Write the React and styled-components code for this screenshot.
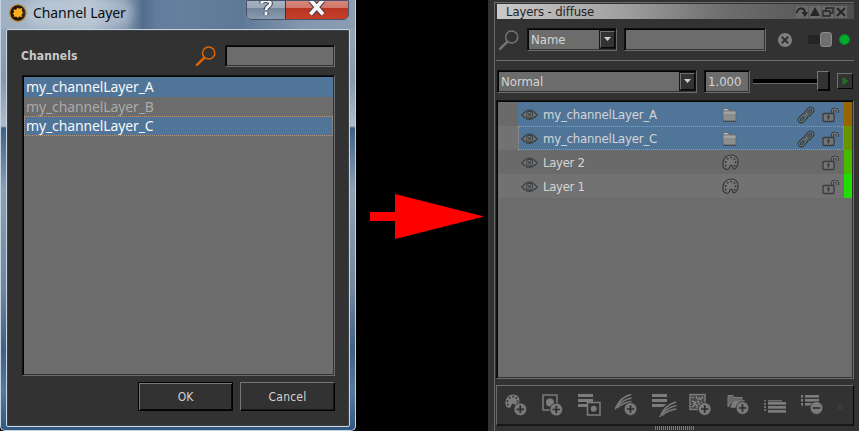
import React from 'react';
import styled, { createGlobalStyle, css } from 'styled-components';

const Global = createGlobalStyle`
  * { box-sizing: border-box; }
  body { margin: 0; background: #000; overflow: hidden; }
  svg { display: block; flex: none; }
`;

const ui = '"Noto Sans", "Open Sans", sans-serif';
const tahoma = '"DejaVu Sans Condensed", "DejaVu Sans", sans-serif';

const Page = styled.main`
  display: flex;
  width: 859px;
  height: 431px;
  background: #000;
  font-family: ${tahoma};
  overflow: hidden;
`;

/* ---------- Channel dialog ---------- */
const Dialog = styled.section`
  width: 356px;
  height: 431px;
  display: flex;
  flex-direction: column;
  padding: 0 5px 3px;
  border: solid #c4d4e2;
  border-width: 0 1px 1px;
  border-radius: 0 0 5px 5px;
  background:
    linear-gradient(180deg, transparent 29px, #94a5b8 29px, #8598ae 80px, #aebdcb 126px, #3f6185 128px, #8aa1b6 190px, #6f879f 290px, #405f83 350px, #56799e 390px, #315780 431px) 0 0 / 100% 100% no-repeat,
    linear-gradient(90deg, #9fb0c2 0, #aebccb 90px, #7d92aa 126px, #536d8c 142px, #617c9c 155px, #65809f 180px, #5e7997 240px, #8396ad 300px, #8c9db2 356px);
`;
const DialogTitle = styled.header`
  height: 29px;
  flex: none;
  display: flex;
  align-items: flex-start;
  padding: 0 0 0 2px;
`;
const AppIcon = styled.svg`margin: 4px 0 0 1px;`;
const TitleText = styled.h1`
  margin: 3px 0 0 3px;
  padding: 0 3px;
  font: 400 14px/20px ${ui};
  letter-spacing: -0.08px;
  color: #0b0e12;
  white-space: nowrap;
  border-radius: 10px;
  background: rgba(205, 216, 228, 0.4);
  box-shadow: 0 0 8px 5px rgba(205, 216, 228, 0.4);
`;
const CaptionButtons = styled.div`
  display: flex;
  margin-left: auto;
  margin-right: 1px;
  height: 20px;
  border: 1px solid #d2dae3;
  border-top: 0;
  border-radius: 0 0 5px 5px;
  overflow: hidden;
  outline: 1px solid #46536a;
  outline-offset: -1px;
`;
const CaptionButton = styled.div`
  width: ${p => (p.$close ? 63 : 38)}px;
  display: flex;
  justify-content: center;
  border-left: ${p => (p.$close ? '1px solid #651c1c' : '0')};
  background: ${p => p.$close
    ? 'linear-gradient(#da8a7f 0, #ce7569 8px, #b8331f 8px, #c94029 20px)'
    : 'linear-gradient(#a5b2c1 0, #9aa9ba 8px, #71849a 8px, #8b9caf 20px)'};
`;
const DialogBody = styled.div`
  flex: 1;
  display: flex;
  flex-direction: column;
  background: #323232;
  border: 1px solid #c9d5e0;
  box-shadow: inset 0 0 0 1px #3c4148;
  padding: 15px 14px 0 15px;
  border-radius: 2px;
`;
const SearchRow = styled.div`
  display: flex;
  height: 22px;
  align-items: center;
`;
const Heading = styled.h2`
  margin: 0 auto 0 -1px;
  font: 700 12px/20px ${tahoma};
  letter-spacing: 0.1px;
  color: #c9c9c9;
`;
const sunken = css`
  background: #6c6c6c;
  border: 1px solid #6c6c6c;
  border-top-color: #111;
  border-left-color: #111;
  box-shadow: inset 1px 1px 0 #050505, inset -1px -1px 0 #333;
`;
const Field = styled.div`
  ${sunken}
  width: ${p => p.$width}px;
  height: ${p => p.$height || 23}px;
  flex: none;
  color: #d4d4d4;
  font-size: 13px;
  line-height: 22px;
  padding-left: 3px;
`;
const SearchField = styled(Field)`
  margin-left: 8px;
`;
const ChannelList = styled.div`
  ${sunken}
  height: 301px;
  flex: none;
  margin-top: 8px;
  padding: 1px 1px 0;
`;
const ChannelRow = styled.div`
  height: ${p => (p.$focus ? 20 : 19.5)}px;
  padding-left: 2px;
  font: 400 14px/19px ${ui};
  letter-spacing: -0.12px;
  color: ${p => (p.$on ? '#f5f8fb' : '#aaa')};
  background: ${p => (p.$on ? '#507599' : 'transparent')};
  outline: ${p => (p.$focus ? '1px dotted #b59678' : '0')};
  outline-offset: -1px;
`;
const DialogActions = styled.div`
  display: flex;
  justify-content: flex-end;
  gap: 7px;
  margin-top: 6px;
`;
const PushButton = styled.button`
  width: 95px;
  height: 29px;
  padding: 1px 0 0;
  border: 1px solid ${p => (p.$primary ? '#000' : '#777')};
  border-right-color: #000;
  border-bottom-color: #000;
  box-shadow: ${p => (p.$primary ? 'inset 1px 1px 0 #777, inset -1px -1px 0 #0b0b0b' : 'inset -1px -1px 0 #151515')};
  background: #323232;
  color: #d2d2d2;
  font: 400 12px/20px ${tahoma};
  letter-spacing: ${p => (p.$primary ? 0 : 0.2)}px;
`;

/* ---------- Arrow ---------- */
const Gap = styled.div`
  width: 132px;
  flex: none;
  padding: 194px 0 0 13px;
`;

/* ---------- Layers palette ---------- */
const Palette = styled.section`
  width: 371px;
  flex: none;
  display: flex;
  flex-direction: column;
  background: #323232;
  padding: 2px 5px 0 6px;
`;
const PaletteFrame = styled.div`
  flex: 1;
  display: flex;
  flex-direction: column;
  border: solid #6b6b6b;
  border-width: 1px 0 0 1px;
  padding: 1px 0 0 1px;
`;
const PaletteTitle = styled.header`
  height: 15px;
  flex: none;
  display: flex;
  align-items: center;
  margin-left: 1px;
  padding: 0 7px 0 9px;
  font-size: 13px;
  letter-spacing: -0.12px;
  line-height: 14px;
  color: #242424;
  background: linear-gradient(90deg, #cacaca, #a0a0a0 35%, #6e6e6e 63%, #4d4d4d);
`;
const TitleIcons = styled.div`
  display: flex;
  gap: 1px;
  margin-left: auto;
`;
const TitleIcon = styled.svg`background: #696969;`;
const FilterRow = styled.div`
  display: flex;
  align-items: center;
  height: 42px;
  flex: none;
  padding-left: 2px;
  border-bottom: 1px solid #6f6f6f;
`;
const BlendRow = styled.div`
  display: flex;
  align-items: center;
  height: 39px;
  flex: none;
  padding: 1px 0 0 1px;
`;
const Combo = styled(Field)`
  display: flex;
  justify-content: space-between;
  margin-left: ${p => p.$left || 0}px;
`;
const ComboArrow = styled.span`
  width: 15px;
  height: 17px;
  margin: 2px 1px 0 0;
  border: 1px solid #707070;
  border-right-color: #080808;
  border-bottom-color: #080808;
  outline: 1px solid #151515;
  outline-offset: 0;
  background: #333;
  display: flex;
  align-items: center;
  justify-content: center;
`;
const QueryField = styled(Field)`margin-left: 7px;`;
const ValueField = styled(Field)`
  margin-left: 7px;
`;
const ClearIcon = styled.svg`margin-left: 11px;`;
const Toggle = styled.div`
  display: flex;
  align-items: center;
  margin-left: 15px;
  &::before { content: ''; width: 10px; height: 7px; background: #222629; border: 1px solid #252525; }
`;
const Knob = styled.div`
  width: 12px;
  height: 15px;
  border-radius: 3px;
  background: #6f6f6f;
  border: 1px solid #8a8a8a;
`;
const Status = styled.div`
  width: 11px;
  height: 11px;
  border-radius: 50%;
  margin-left: 7px;
  background: #00ad2b;
  border: 1px solid #0a8428;
`;
const Slider = styled.div`
  display: flex;
  align-items: center;
  margin-left: 3px;
  &::before { content: ''; width: 64px; height: 4px; background: #000; border: solid #686868; border-width: 0 0 1px; }
`;
const SliderHandle = styled.div`
  width: 13px;
  height: 20px;
  background: #333;
  border: 1px solid #777;
  border-right: 2px solid #080808;
  border-bottom: 2px solid #080808;
`;
const PlayButton = styled.div`
  width: 16px;
  height: 16px;
  margin-left: 7px;
  display: flex;
  align-items: center;
  justify-content: center;
  border: 1px solid #727272;
  border-right-color: #050505;
  border-bottom-color: #050505;
`;
const LayerList = styled.div`
  ${sunken}
  height: 279px;
  flex: none;
  padding: 1px 1px 0;
`;
const LayerRow = styled.div`
  display: flex;
  height: 24px;
  padding-left: 20px;
  background: ${p => (p.$alt ? '#727272' : '#6a6a6a')};
`;
const LayerContent = styled.div`
  flex: 1;
  display: grid;
  grid-template-columns: 25px 179px 75px 25px 1fr;
  align-items: center;
  padding-top: 1px;
  background: ${p => (p.$on ? '#507599' : 'transparent')};
  outline: ${p => (p.$focus ? '1px dotted #b59678' : '0')};
  outline-offset: -1px;
  font-size: 13px;
  letter-spacing: ${p => p.$on ? -0.18 : -0.3}px;
  line-height: 23px;
  color: #d5d5d5;
  white-space: nowrap;
`;
const EyeIcon = styled.svg`margin-left: 3px;`;
const ColorTag = styled.div`
  width: 8px;
  background: ${p => p.$color};
`;
const Toolbar = styled.div`
  height: 41px;
  flex: none;
  display: flex;
  align-items: center;
  margin-top: 6px;
  padding: 3px 0 0 7px;
  border: 1px solid #6b6b6b;
  border-right-color: #050505;
  border-bottom: 2px solid #171717;
`;
const Tool = styled.div`
  width: 37.1px;
  height: 28px;
  flex: none;
`;
const More = styled.span`
  font-size: 13px;
  line-height: 20px;
  color: #444;
  margin-left: -1px;
`;
const Grip = styled.div`
  width: 39px;
  height: 4px;
  margin-left: 159px;
  background: repeating-linear-gradient(90deg, #777 0 1px, #323232 1px 2px);
`;

/* ---------- Drawings ---------- */
const SearchIcon = ({ color }) => (
  <svg width="22" height="22" viewBox="0 0 22 22" fill="none" stroke={color}>
    <circle cx="13.7" cy="8" r="6.1" strokeWidth="1.5" />
    <path d="M9.2 12.8 2 19.8" strokeWidth="2.5" strokeLinecap="round" />
  </svg>
);
const Down = () => <svg width="9" height="5"><path d="M1 0h7L4.5 4z" fill="#d0d0d0" /></svg>;

const Eye = () => (
  <EyeIcon width="17" height="14" viewBox="0 0 18 14" fill="none" stroke="#3b4145">
    <path d="M1 7Q9-3.5 17 7Q9 16 1 7Z" fill="#777" strokeWidth="1.4" />
    <circle cx="9" cy="6.5" r="3.3" strokeWidth="1.2" />
    <circle cx="9" cy="6.5" r="1" strokeWidth="1.2" />
  </EyeIcon>
);
const Folder = () => (
  <svg width="16" height="16" viewBox="0 0 16 16">
    <path d="M1 14V1.5h5l1.5 2H14V14Z" fill="#8e8e8e" stroke="#596673" strokeWidth=".8" />
    <path d="M1.5 6H13.5M2 2.5h4" stroke="#bababa" />
    <path d="M1 14.4h13" stroke="#41484d" />
  </svg>
);
const Palet = ({ stroke = '#383838', fill = '#777' }) => (
  <svg width="17" height="17" viewBox="0 0 17 17">
    <path d="M5.2 15.4C2.2 15.2.7 12.5.8 9.3C1 4.7 4.3 1 9.1 1C14 1 16.2 4.2 16 8C15.8 11.7 14 14.8 11.9 14.9C10 15 11.3 11.3 9.2 11.2C7 11.1 8.2 15.6 5.2 15.4Z" fill={fill} stroke={stroke} strokeWidth="1.2" />
    <g fill={stroke}>
      <circle cx="5.7" cy="4.8" r="1" /><circle cx="9.1" cy="3.5" r="1" />
      <circle cx="12.3" cy="4.9" r="1" /><circle cx="13.5" cy="8.3" r="1" />
      <circle cx="3.5" cy="7.9" r="1" /><circle cx="3.7" cy="11.4" r="1" />
      <circle cx="12.6" cy="11.7" r="1" />
    </g>
  </svg>
);
const Chain = () => (
  <svg width="18" height="18" viewBox="0 0 18 18" fill="none">
    <g transform="rotate(-45 9 9)">
      {['#303940', '#707476'].map((c, i) => (
        <g key={c} stroke={c} strokeWidth={i ? 1.2 : 3.2}>
          <rect x=".4" y="6.9" width="8" height="4.2" rx="2.1" />
          <rect x="9.6" y="6.9" width="8" height="4.2" rx="2.1" />
          <path d="M5.5 9h7" />
        </g>
      ))}
    </g>
  </svg>
);
const Lock = () => (
  <svg width="18" height="16" viewBox="0 0 18 16">
    <path d="M10.2 8V5C10.2 1.3 15.6 1.3 15.6 5V6" fill="none" stroke="#383d40" strokeWidth="3.2" />
    <path d="M10.2 8V5C10.2 1.3 15.6 1.3 15.6 5V6" fill="none" stroke="#777" strokeWidth="1.3" />
    <rect x="1" y="6.5" width="11" height="8" rx="1" fill="#747474" stroke="#383d40" strokeWidth="1.3" />
    <path d="M6.5 8.2v4.4M5.4 9.6h2.2" stroke="#303538" strokeWidth="1.4" />
  </svg>
);

const Badge = ({ minus, x = 17, y = 17 }) => (
  <g>
    <circle cx={x} cy={y} r="6.4" fill="#7a7a7a" stroke="#323232" strokeWidth=".8" />
    <path d={minus ? `M${x - 3.7} ${y}h7.4` : `M${x - 3.7} ${y}h7.4M${x} ${y - 3.7}v7.4`} stroke="#2d2d2d" strokeWidth="1.7" />
  </g>
);
const Feather = ({ x = 0, y = 0 }) => (
  <g transform={`translate(${x} ${y})`} fill="none" stroke="#7c7c7c">
    <path d="M0 15.5C3 8 8 2.5 16 .5" strokeWidth="1.6" />
    <path d="M1.5 12.5C6 8 10 5.3 16.5 4M2 14C6 10.5 11 8 16.5 7.5" strokeWidth="1.3" />
  </g>
);
const Bars = ({ x = 2, y = 2, w = 15, step = 5, h = 3 }) => (
  <g fill="#7c7c7c">{[0, 1, 2].map(i => <rect key={i} x={x} y={y + i * step} width={w} height={h} />)}</g>
);
const ListLines = ({ x, y, w }) => (
  <g fill="#7c7c7c">{[0, 1, 2].map(i => <React.Fragment key={i}><rect x={x} y={y + i * 4} width="2" height="2.6" /><rect x={x + 4} y={y + i * 4} width={w} height="2.6" /></React.Fragment>)}</g>
);

const tools = [
  <g key="palette"><Palet fill="#7c7c7c" stroke="#343434" /><Badge x={16.3} y={16.3} /></g>,
  <g key="mask"><rect x="2" y="2" width="14" height="15" fill="none" stroke="#7c7c7c" strokeWidth="1.5" /><circle cx="9" cy="9.5" r="4" fill="#7c7c7c" /><Badge x={15.3} y={16.5} /></g>,
  <g key="mask-stack"><Bars x={0} y={1} /><rect x="9.5" y="9.5" width="12.5" height="12.5" fill="#303030" stroke="#7c7c7c" strokeWidth="1.5" /><circle cx="15.7" cy="15.7" r="3" fill="#7c7c7c" /></g>,
  <g key="adjustment"><Feather y={1} /><Badge x={15.5} y={16} /></g>,
  <g key="adjustment-stack"><Bars x={0} y={1} /><path d="M7 24 10 15 16 9.5H24V24Z" fill="#323232" /><Feather x={8} y={8.5} /></g>,
  <g key="procedural"><rect x="1" y="1.5" width="15" height="15" fill="#494949" stroke="#7c7c7c" strokeWidth="1.4" /><path d="m3 4 2 1m2-2 1 3m3-2-2 3m5-3-3 3M3 8l3 1m2-1 2 1m2 0 2 2M4 11l3-2M3 14l4-3m1 4v-4m1-2 3 5" fill="none" stroke="#909090" strokeWidth="1.1" /><Badge x={15.7} y={16} /></g>,
  <g key="folder"><path d="M1 14V2.5h5l1.5 2H15V7H6Z" fill="#686868" stroke="#7c7c7c" /><path d="M3 15 6 7h12l-3 8Z" fill="#7c7c7c" stroke="#444" strokeWidth=".6" /><Badge x={15.5} y={15} /></g>,
  <g key="duplicate"><g fill="#6e6e6e"><rect y="7" width="2" height="1.5" /><rect x="4" y="7" width="14" height="1.5" /><rect y="10" width="2" height="2" /><rect y="13" width="2" height="2" /><rect y="16" width="2" height="2" /></g><g fill="#7c7c7c"><rect x="4" y="9" width="18" height="2.7" /><rect x="4" y="13" width="18" height="2.7" /><rect x="4" y="17" width="18" height="2.7" /></g></g>,
  <g key="remove"><ListLines x={0} y={2} w={14} /><Badge minus x={15.5} y={15} /></g>,
];

const layers = [
  { name: 'my_channelLayer_A', on: true, color: '#986600', kind: 'folder' },
  { name: 'my_channelLayer_C', on: true, focus: true, alt: true, color: '#689400', kind: 'folder' },
  { name: 'Layer 2', color: '#45bb00', kind: 'paint' },
  { name: 'Layer 1', alt: true, color: '#20df00', kind: 'paint' },
];

export default function App() {
  return (
    <Page>
      <Global />
      <Dialog>
        <DialogTitle>
          <AppIcon width="18" height="18" viewBox="0 0 18 18">
            <circle cx="9" cy="9" r="8.2" fill="#201307" stroke="#c98514" strokeWidth="1.1" />
            <path d="M8.5 3.5l1.5 1.3 3-.8-.2 2.8L14 9l-1.5 1.6.5 2.3-2.8-.5L9 14l-1.8-1.5-2.5.4.4-2.3L3.4 10l1.8-2-1-2.6 3 .3Z" fill="#ffae1c" />
          </AppIcon>
          <TitleText>Channel Layer</TitleText>
          <CaptionButtons>
            <CaptionButton>
              <svg width="16" height="18" viewBox="0 0 16 18" fill="none">
                {['#3d4652', '#f7f7f7'].map((c, i) => <path key={c} d="M3.5 3.5C3.5-.5 12.5-.5 12.5 3.5C12.5 6.5 8 6 8 10M8 12v3" stroke={c} strokeWidth={i ? 2.8 : 4.8} />)}
              </svg>
            </CaptionButton>
            <CaptionButton $close>
              <svg width="20" height="18" viewBox="0 0 20 18">
                {['#563c45', '#f7f7f7'].map((c, i) => <path key={c} d="M3.5 0 16 14.2M16 0 3.5 14.2" stroke={c} strokeWidth={i ? 3.8 : 6} />)}
              </svg>
            </CaptionButton>
          </CaptionButtons>
        </DialogTitle>
        <DialogBody>
          <SearchRow>
            <Heading>Channels</Heading>
            <SearchIcon color="#df6500" />
            <SearchField $width={110} $height={22} />
          </SearchRow>
          <ChannelList>
            <ChannelRow $on>my_channelLayer_A</ChannelRow>
            <ChannelRow>my_channelLayer_B</ChannelRow>
            <ChannelRow $on $focus>my_channelLayer_C</ChannelRow>
          </ChannelList>
          <DialogActions>
            <PushButton $primary>OK</PushButton>
            <PushButton>Cancel</PushButton>
          </DialogActions>
        </DialogBody>
      </Dialog>
      <Gap>
        <svg width="117" height="46"><path d="M1 18h25V0l89 22.5L26 45V27H1Z" fill="#f00" /></svg>
      </Gap>
      <Palette>
        <PaletteFrame>
          <PaletteTitle>
            Layers - diffuse
            <TitleIcons>
              <TitleIcon width="12" height="12"><path d="M1 7C1 1 9 1 9 7" fill="none" stroke="#262626" strokeWidth="1.8" /><path d="M5.5 6H12L9 11Z" fill="#262626" /></TitleIcon>
              <TitleIcon width="12" height="12"><path d="M6 1 11 10H1Z" fill="#262626" /></TitleIcon>
              <TitleIcon width="12" height="12"><path d="M4 5V2h7v5H8M1 5h7v5H1Z" fill="none" stroke="#262626" strokeWidth="1.3" /></TitleIcon>
              <TitleIcon width="12" height="12"><path d="m2 2 8 8m0-8-8 8" stroke="#262626" strokeWidth="2" /></TitleIcon>
            </TitleIcons>
          </PaletteTitle>
          <FilterRow>
            <SearchIcon color="#747474" />
            <Combo $width={90} $left={7}>Name<ComboArrow><Down /></ComboArrow></Combo>
            <QueryField $width={142} />
            <ClearIcon width="16" height="16">
              <circle cx="8" cy="8" r="7" fill="#808080" />
              <path d="m4.8 4.8 6.4 6.4m0-6.4-6.4 6.4" stroke="#303030" strokeWidth="2" />
            </ClearIcon>
            <Toggle><Knob /></Toggle>
            <Status />
          </FilterRow>
          <BlendRow>
            <Combo $width={200}>Normal<ComboArrow><Down /></ComboArrow></Combo>
            <ValueField $width={46}>1.000</ValueField>
            <Slider><SliderHandle /></Slider>
            <PlayButton><svg width="9" height="10"><path d="M1.5 1v8l6-4z" fill="#21712b" /></svg></PlayButton>
          </BlendRow>
          <LayerList>
            {layers.map(l => (
              <LayerRow key={l.name} $alt={l.alt}>
                <LayerContent $on={l.on} $focus={l.focus}>
                  <Eye />
                  <span>{l.name}</span>
                  {l.kind === 'folder' ? <Folder /> : <Palet />}
                  {l.on ? <Chain /> : <span />}
                  <Lock />
                </LayerContent>
                <ColorTag $color={l.color} />
              </LayerRow>
            ))}
          </LayerList>
          <Toolbar>
            {tools.map(t => <Tool key={t.key}><svg width="25" height="25" viewBox="0 0 25 25">{t}</svg></Tool>)}
            <More>»</More>
          </Toolbar>
          <Grip />
        </PaletteFrame>
      </Palette>
    </Page>
  );
}
